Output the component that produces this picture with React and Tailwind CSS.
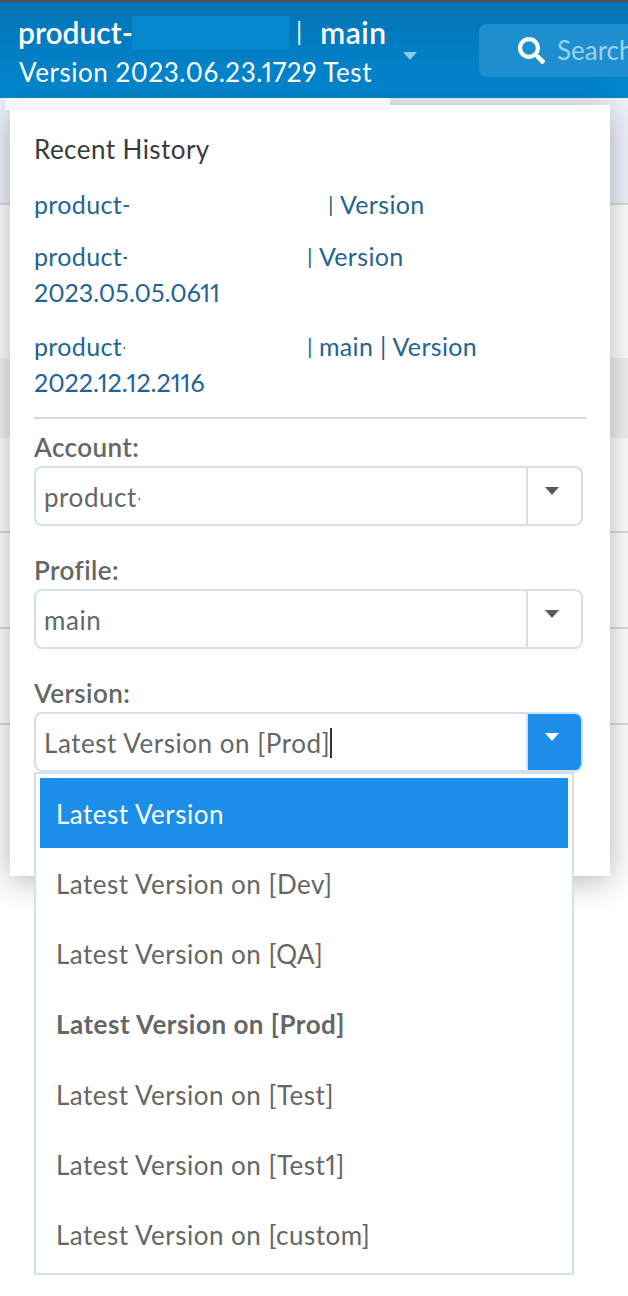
import React from 'react'
import { FaSearch } from 'react-icons/fa'

const FONT = { fontFamily: '"Lato", "Open Sans", sans-serif' }

const Caret = ({ color = 'border-t-[#5a5a5a]' }) => (
  <span className={`block w-0 h-0 border-x-[7px] border-x-transparent border-t-[8px] ${color}`} />
)

const ComboField = ({ label, value, active, cursor, masked, className = '' }) => (
  <div className={className}>
    <label className="block h-[26px] text-[26px] leading-[26px] font-semibold tracking-[0.4px] text-[#666]">{label}</label>
    <div className="mt-[6px] flex h-[60px] w-[549px] rounded-[8px] border-2 border-[#d5e0ea] bg-white overflow-hidden">
      <div className="flex-1 flex items-center pl-[8px] pt-[2px] text-[26px] tracking-[0.55px] text-[#666]">
        <span className={masked ? 'w-[96px] whitespace-nowrap' : ''}>{value}</span>
        {masked && <span className="relative h-[40px] w-[40px] bg-white" />}
        {cursor && <span className="h-[30px] w-[2px] bg-[#333]" />}
      </div>
      <div className={`w-[55px] flex justify-center pt-[19px] pr-[6px] border-l-2 border-[#d5e0ea] ${active ? 'bg-[#1a8ee8]' : ''}`}>
        <Caret color={active ? 'border-t-white' : 'border-t-[#5a5a5a]'} />
      </div>
    </div>
  </div>
)

// the account name is blanked out in the picture, the white span covers it
const HistoryLine = ({ nameWidth, maskFrom, rest }) => (
  <div className="flex h-[36px] tracking-[0.35px]">
    <span className="whitespace-nowrap" style={{ width: maskFrom }}>product-</span>
    <span className="relative bg-white" style={{ width: nameWidth - maskFrom }} />
    <span className="text-[22px]">|</span>
    <span className="ml-[6px]">{rest}</span>
  </div>
)

const options = [
  'Latest Version on [Dev]',
  'Latest Version on [QA]',
  'Latest Version on [Prod]',
  'Latest Version on [Test]',
  'Latest Version on [Test1]',
  'Latest Version on [custom]'
]

const BgRow = ({ height, className = '' }) => (
  <div className={`border-b-2 border-[#dcdcdc] ${className}`} style={{ height }} />
)

export default function App() {
  return (
    <div className="relative h-[1296px] w-[628px] overflow-hidden bg-white" style={FONT}>
      {/* Page behind the popover */}
      <div className="h-[2px] bg-[#555]" />
      <header className="flex h-[96px] bg-gradient-to-b from-[#0274b6] to-[#0288cf] pl-[18px]">
        <div className="pt-[12px] w-[380px] shrink-0">
          <div className="flex h-[36px] items-center text-[30px] font-semibold text-white">
            <span className="w-[114px]">product-</span>
            <span className="h-[33px] w-[158px] bg-[#0587cd]" />
            <span className="ml-[6px] text-[25px] font-normal">|</span>
            <span className="ml-[18px] tracking-[0.5px]">main</span>
          </div>
          <div className="mt-[6px] ml-px text-[26px] leading-[32px] tracking-[0.55px] text-white proportional-nums whitespace-nowrap">Version 2023.06.23.1729 Test</div>
        </div>
        <div className="ml-[5px] pt-[50px] shrink-0">
          <Caret color="border-t-[#8ec8e8]" />
        </div>
        <div className="mt-[22px] ml-[62px] flex h-[53px] min-w-0 flex-1 items-center overflow-hidden rounded-l-[8px] bg-[#1d8fcf] pl-[39px]">
          <FaSearch size={27} className="text-white shrink-0" />
          <span className="ml-[12px] text-[26px] text-[#9fd0ea]">Search</span>
        </div>
      </header>
      <BgRow height="107px" className="bg-[#eef2fb]" />
      <div className="h-[153px]" />
      <div className="h-[80px] bg-[#f1f1f1]" />
      <BgRow height="95px" />
      <BgRow height="96px" />
      <BgRow height="96px" />

      {/* Popover */}
      <div className="absolute left-[10px] top-[105px] h-[771px] w-[600px] bg-white pl-[24px] pt-[29px] shadow-[0_4px_30px_rgba(0,0,0,0.3)]">
        <h3 className="text-[26px] leading-[30px] tracking-[0.45px] text-[#3a3a3a]">Recent History</h3>
        <div className="mt-[22px] text-[25px] leading-[36px] text-[#1f6594] w-[552px]">
          <HistoryLine nameWidth={294} maskFrom={95} rest="Version" />
          <div className="mt-[16px]">
            <HistoryLine nameWidth={273} maskFrom={93} rest="Version" />
            <div className="h-[36px] proportional-nums">2023.05.05.0611</div>
          </div>
          <div className="mt-[18px]">
            <HistoryLine nameWidth={273} maskFrom={91} rest="main | Version" />
            <div className="h-[36px] proportional-nums">2022.12.12.2116</div>
          </div>
        </div>
        <div className="mt-[17px] h-[2px] w-[552px] bg-[#d8d8d8]" />
        <ComboField className="mt-[15px]" label="Account:" value="product-" masked />
        <ComboField className="mt-[31px]" label="Profile:" value="main" />
        <ComboField className="mt-[31px]" label="Version:" value="Latest Version on [Prod]" active cursor />

        {/* Version dropdown list */}
        <ul className="absolute left-[24px] top-[667px] z-10 h-[503px] w-[540px] border-2 border-[#d5e0ea] bg-white p-[4px] text-[26px] tracking-[0.5px] text-[#666] proportional-nums">
          <li className="flex h-[70px] items-center bg-[#1a8ee8] pl-[16px] pt-[2px] text-white">Latest Version</li>
          {options.map((opt) => (
            <li
              key={opt}
              className={`flex h-[70.3px] items-center pl-[16px] pt-[2px] ${opt.includes('Prod') ? 'font-bold' : ''}`}
            >
              {opt}
            </li>
          ))}
        </ul>
      </div>

      {/* Pale band left over the popover's top edge */}
      <div className="absolute left-[5px] top-[98px] h-[12px] w-[385px] bg-[#f3f6fd]" />
    </div>
  )
}
